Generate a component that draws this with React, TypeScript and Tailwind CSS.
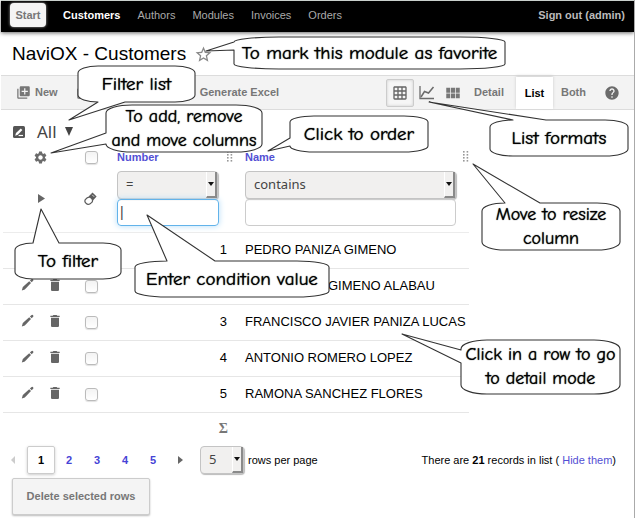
import React from "react";
import {
  MdDelete,
  MdGridOn,
  MdHelp,
  MdLibraryAdd,
  MdPictureAsPdf,
  MdSettings,
  MdStarOutline,
  MdViewModule,
} from "react-icons/md";

type Side = "left" | "top" | "bottom";

interface CalloutProps {
  place: string;
  width: number;
  height: number;
  rx: number;
  ry: number;
  side: Side;
  from: number;
  to: number;
  tip: [number, number];
  text?: string;
  children: React.ReactNode;
}

type Shape = Omit<CalloutProps, "place" | "children" | "text">;

function bubblePath({ width: w, height: h, rx, ry, side, from, to, tip }: Shape) {
  const [tx, ty] = tip;
  const arc = `A${rx} ${ry} 0 0 1`;
  const top = side === "top" ? `L${from} 0L${tx} ${ty}L${to} 0` : "";
  const bottom = side === "bottom" ? `L${to} ${h}L${tx} ${ty}L${from} ${h}` : "";
  const left = side === "left" ? `L0 ${to}L${tx} ${ty}L0 ${from}` : "";
  return `M${rx} 0${top}L${w - rx} 0${arc} ${w} ${ry}L${w} ${h - ry}${arc} ${w - rx} ${h}${bottom}L${rx} ${h}${arc} 0 ${h - ry}${left}L0 ${ry}${arc} ${rx} 0Z`;
}

/** Speech bubble that lies over the page and points at one of its parts. */
function Callout({ place, children, text = "text-[19px]", ...shape }: CalloutProps) {
  return (
    <div
      className={`pointer-events-none absolute flex items-center justify-center ${place}`}
      style={{ width: shape.width, height: shape.height }}
    >
      <svg className="absolute inset-0 h-full w-full overflow-visible" aria-hidden="true">
        <path d={bubblePath(shape)} fill="#fff" stroke="#333" strokeWidth="1.1" strokeLinejoin="round" />
      </svg>
      <span
        className={`relative text-center font-['Comic_Neue','Comic_Sans_MS',Lato,sans-serif] leading-6 whitespace-nowrap text-black [text-shadow:0_0_1px_#000] ${text}`}
      >
        {children}
      </span>
    </div>
  );
}

function Grip() {
  return (
    <svg width="6" height="12" viewBox="0 0 6 12" fill="#999" aria-hidden="true">
      {[0, 3, 6, 9].map((y) => (
        <React.Fragment key={y}>
          <rect x="0" y={y} width="1.6" height="1.6" />
          <rect x="3.6" y={y} width="1.6" height="1.6" />
        </React.Fragment>
      ))}
    </svg>
  );
}

function Eraser() {
  return (
    <svg width="13" height="13" viewBox="0 0 13 13" aria-hidden="true">
      <path d="M8.5 .5L12.6 4.4L9 8.6L4.6 4.4Z" fill="#5c5c5c" />
      <path d="M8.2 2.8L10.2 4.8" stroke="#ddd" />
      <rect x="1" y="5.6" width="7.4" height="6.4" rx="3" transform="rotate(-38 4.7 8.8)" fill="#fff" stroke="#5c5c5c" strokeWidth="1.2" />
    </svg>
  );
}

function Pencil() {
  return (
    <svg width="13" height="13" viewBox="0 0 13 13" fill="#666" aria-hidden="true">
      <path d="M.8 12.4L1.8 9L8.2 3.2L10 5L3.8 11.4Z" />
      <path d="M8.9 2.5L10.6 1Q11.2 .5 11.8 1.1L12.2 1.6Q12.7 2.2 12.2 2.7L10.7 4.3Z" />
    </svg>
  );
}

function LineChart() {
  return (
    <svg width="16" height="14" viewBox="0 0 16 14" fill="none" stroke="#6b6b6b" aria-hidden="true">
      <path d="M1 0V12.5H15" strokeWidth="1.3" />
      <path d="M2 11L5.5 5.5L9.5 7L14.5 1" strokeWidth="1.5" />
    </svg>
  );
}

function FilterEdit() {
  return (
    <svg width="12" height="12" viewBox="0 0 12 12" aria-hidden="true">
      <rect width="12" height="12" rx="1.5" fill="#555" />
      <path d="M2.2 9.8L3 7L7.8 2.5L9.4 4L4.8 8.8Z" fill="#fff" />
      <path d="M5.6 9.5H10" stroke="#fff" strokeWidth="1.2" />
    </svg>
  );
}

interface DropProps {
  label: string;
  value: string;
  width: string;
}

function Drop({ label, value, width }: DropProps) {
  return (
    <div className={`flex h-7 rounded-sm border border-[#c4c4c4] bg-[#f1f0ef] shadow-[1px_1px_1px_#bbb] ${width}`}>
      <div className="relative w-full">
        <select
          aria-label={label}
          defaultValue={value}
          className="h-full w-full appearance-none bg-transparent pl-2 font-['Noto_Sans','Open_Sans',sans-serif] text-[13px] text-[#444] outline-none"
        >
          <option>{value}</option>
        </select>
        <span className="pointer-events-none absolute inset-y-0 right-0 flex w-[11px] items-center justify-center border-r-2 border-b-2 border-l border-r-[#8a8a8a] border-b-[#8a8a8a] border-l-white bg-[#f1f0ef]">
          <svg width="6" height="4" viewBox="0 0 6 4" aria-hidden="true">
            <path d="M0 0H6L3 4Z" fill="#111" />
          </svg>
        </span>
      </div>
    </div>
  );
}

function Tick({ label }: { label: string }) {
  return (
    <input
      type="checkbox"
      aria-label={label}
      className="block h-[13px] w-[13px] appearance-none rounded-[3px] border border-[#bbb] bg-gradient-to-b from-[#f3f3f3] to-white shadow-[0_1px_1px_#e0e0e0]"
    />
  );
}

const customers = [
  { id: 1, number: "1", name: "PEDRO PANIZA GIMENO", indent: "" },
  { id: 2, number: "", name: "GIMENO ALABAU", indent: "pl-[83px]" },
  { id: 3, number: "3", name: "FRANCISCO JAVIER PANIZA LUCAS", indent: "" },
  { id: 4, number: "4", name: "ANTONIO ROMERO LOPEZ", indent: "" },
  { id: 5, number: "5", name: "RAMONA SANCHEZ FLORES", indent: "" },
];

function Header() {
  return (
    <header className="ml-px flex h-8 items-center border-t border-[#c9d0cc] bg-black pr-[9px] pb-[3px] pl-[9px] text-[11px] text-[#aaa] shadow-[0_1px_4px_#666]">
      <nav className="flex items-center gap-[17px]">
        <a href="#start" className="flex h-6 w-[36px] items-center justify-center rounded-sm bg-[#f4f4f4] font-bold text-[#777] shadow-[0_0_3px_#aaa]">
          Start
        </a>
        <a href="#customers" className="font-bold text-white">Customers</a>
        <a href="#authors">Authors</a>
        <a href="#modules">Modules</a>
        <a href="#invoices">Invoices</a>
        <a href="#orders">Orders</a>
      </nav>
      <a href="#signout" className="ml-auto font-bold text-[#bbb]">Sign out (admin)</a>
    </header>
  );
}

function Toolbar() {
  return (
    <div className="ml-px flex h-[35px] items-center border-y border-[#dcdcdc] bg-[#f3f3f3] pr-[14px] pl-[15px] text-[11px] font-bold text-[#777]">
      <button className="flex items-center gap-1">
        <MdLibraryAdd size={15} /> New
      </button>
      <button className="ml-[18px]" aria-label="PDF">
        <MdPictureAsPdf size={15} />
      </button>
      <button className="ml-[109px]">Generate Excel</button>
      <div className="ml-auto flex h-full items-center">
        <button aria-label="Table" className="flex h-7 w-7 items-center justify-center rounded-xs border border-[#ccc] bg-[#f6f6f6] text-[#666] shadow-[inset_0_0_3px_#ccc]">
          <MdGridOn size={16} />
        </button>
        <button aria-label="Chart" className="ml-1 p-px">
          <LineChart />
        </button>
        <button aria-label="Cards" className="ml-2">
          <MdViewModule size={18} />
        </button>
        <button className="ml-3">Detail</button>
        <button className="ml-3 h-8 w-[37px] self-end bg-white text-black shadow-[0_-1px_3px_#ccc]">List</button>
        <button className="ml-2">Both</button>
        <button aria-label="Help" className="ml-[18px] text-[#6b6b6b]">
          <MdHelp size={16} />
        </button>
      </div>
    </div>
  );
}

function CustomerTable() {
  return (
    <table className="ml-[3px] w-[466px] table-fixed border-collapse text-left">
      <colgroup>
        <col className="w-[75px]" />
        <col className="w-[36px]" />
        <col className="w-[119px]" />
        <col />
      </colgroup>
      <thead>
        <tr className="h-6 text-[11px] text-[#5350d4]">
          <th className="pl-[30px]">
            <button aria-label="Columns" className="block text-[#6b6b6b]">
              <MdSettings size={15} />
            </button>
          </th>
          <th className="pl-[7px]"><Tick label="Select all" /></th>
          <th className="pl-[3px]">
            <div className="flex items-center justify-between">
              <a href="#number">Number</a>
              <Grip />
            </div>
          </th>
          <th className="pl-3">
            <div className="flex items-center justify-between">
              <a href="#name">Name</a>
              <Grip />
            </div>
          </th>
        </tr>
        <tr className="h-[63px] border-b border-[#ececec]">
          <td className="pb-1 pl-[35px]">
            <button aria-label="Filter" className="block">
              <svg width="7" height="9" viewBox="0 0 7 9" aria-hidden="true"><path d="M0 0L7 4.5L0 9Z" fill="#666" /></svg>
            </button>
          </td>
          <td className="pb-1 pl-[6px]"><button aria-label="Clear" className="block"><Eraser /></button></td>
          <td className="pb-1 pl-[3px]">
            <Drop label="Number comparator" value="=" width="w-[101px]" />
            <input
              aria-label="Number value"
              defaultValue="|"
              className="block h-[27px] w-[102px] rounded-sm border border-[#62b3ea] pl-[2px] font-['Liberation_Sans',Arial,sans-serif] text-[14px] text-[#444] shadow-[0_0_6px_#b5dcf7] outline-none"
            />
          </td>
          <td className="pb-1 pl-3">
            <Drop label="Name comparator" value="contains" width="w-[211px]" />
            <input aria-label="Name value" className="block h-[27px] w-[211px] rounded-sm border border-[#ccc] outline-none" />
          </td>
        </tr>
      </thead>
      <tbody className="text-[13px] text-black">
        {customers.map((c) => (
          <tr key={c.id} className="h-9 border-b border-[#e6e6e6]">
            <td className="pb-[3px] pl-[18px]">
              <div className="flex items-center gap-[13px] text-[#666]">
                <button aria-label="Edit"><Pencil /></button>
                <button aria-label="Delete"><MdDelete size={16} /></button>
              </div>
            </td>
            <td className="pl-[7px]"><Tick label={`Select customer ${c.id}`} /></td>
            <td className="pr-[6px] text-right">{c.number}</td>
            <td className="pl-3 whitespace-nowrap"><span className={c.indent}>{c.name}</span></td>
          </tr>
        ))}
      </tbody>
      <tfoot>
        <tr className="h-[32px]">
          <td colSpan={3} className="pr-[5px] text-right font-['Liberation_Serif',serif] text-[14px] font-bold text-[#777]">Σ</td>
          <td />
        </tr>
      </tfoot>
    </table>
  );
}

function Pager() {
  return (
    <div className="flex h-8 items-center pr-[18px] pl-[11px] text-[11px] text-black">
      <svg width="4" height="8" viewBox="0 0 4 8" aria-hidden="true"><path d="M4 0L0 4L4 8Z" fill="#ccc" /></svg>
      <div className="ml-3 flex font-bold text-[#4643d6]">
        <a href="#page1" className="flex h-7 w-7 items-center justify-center rounded-xs border border-[#ccc] text-black shadow-[0_1px_3px_#ccc]">1</a>
        <a href="#page2" className="flex h-7 w-7 items-center justify-center">2</a>
        <a href="#page3" className="flex h-7 w-7 items-center justify-center">3</a>
        <a href="#page4" className="flex h-7 w-7 items-center justify-center">4</a>
        <a href="#page5" className="flex h-7 w-7 items-center justify-center">5</a>
      </div>
      <a href="#next" aria-label="Next" className="ml-[11px]">
        <svg width="5" height="8" viewBox="0 0 5 8" aria-hidden="true"><path d="M0 0L5 4L0 8Z" fill="#666" /></svg>
      </a>
      <div className="ml-[17px]"><Drop label="Rows per page" value="5" width="w-11" /></div>
      <span className="ml-1">rows per page</span>
      <span className="ml-auto">
        There are <b>21</b> records in list ( <a href="#hide" className="text-[#5350d4]">Hide them</a>)
      </span>
    </div>
  );
}

export default function App() {
  return (
    <div className="relative min-h-screen overflow-hidden border-r border-[#aaa] bg-white font-['Liberation_Sans',Arial,sans-serif]">
      <Header />
      <div className="flex h-[43px] items-center gap-2 pt-[2px] pl-3">
        <h1 className="text-[19px] text-black">NaviOX - Customers</h1>
        <button aria-label="Favorite" className="text-[#888]"><MdStarOutline size={19} /></button>
      </div>
      <Toolbar />
      <div className="flex h-[35px] items-center gap-3 pt-2 pl-[13px]">
        <button aria-label="Edit filter"><FilterEdit /></button>
        <button className="flex items-center gap-2 font-['Noto_Sans','Open_Sans',sans-serif] text-[17px] text-[#444]">
          All
          <svg width="8" height="9" viewBox="0 0 8 9" aria-hidden="true"><path d="M0 0H8L4 9Z" fill="#444" /></svg>
        </button>
      </div>
      <CustomerTable />
      <Pager />
      <button className="mt-[2px] ml-3 block h-[37px] w-[138px] rounded-xs border border-[#ccc] bg-[#f4f4f4] text-[11px] font-bold text-[#777] shadow-[0_1px_2px_#bbb]">
        Delete selected rows
      </button>

      <Callout place="left-[234px] top-[37px]" width={271} height={32} rx={45} ry={5} side="left" from={5} to={13} tip={[-28, 14]}>
        To mark this module as favorite
      </Callout>
      <Callout place="left-[78px] top-[66px]" width={117} height={36} rx={20} ry={7} side="bottom" from={20} to={47} tip={[-9, 54]}>
        Filter list
      </Callout>
      <Callout place="left-[106px] top-[105px]" width={156} height={47} rx={26} ry={8} side="left" from={28} to={39} tip={[-55, 48]} text="text-[18px]">
        To add, remove
        <br />
        and move columns
      </Callout>
      <Callout place="left-[290px] top-[116px]" width={138} height={36} rx={24} ry={6} side="left" from={22} to={30} tip={[-22, 35]}>
        Click to order
      </Callout>
      <Callout place="left-[490px] top-[120px]" width={138} height={36} rx={23} ry={7} side="top" from={23} to={56} tip={[-61, -18]}>
        List formats
      </Callout>
      <Callout place="left-[482px] top-[203px]" width={138} height={47} rx={23} ry={8} side="top" from={23} to={58} tip={[-9, -39]} text="text-[18px]">
        Move to resize
        <br />
        column
      </Callout>
      <Callout place="left-[15px] top-[243px]" width={106} height={36} rx={18} ry={7} side="top" from={18} to={44} tip={[26, -34]}>
        To filter
      </Callout>
      <Callout place="left-[135px] top-[261px]" width={194} height={36} rx={32} ry={6} side="top" from={32} to={80} tip={[12, -46]}>
        Enter condition value
      </Callout>
      <Callout place="left-[461px] top-[340px]" width={159} height={54} rx={26} ry={9} side="left" from={10} to={23} tip={[-59, -6]} text="text-[18px]">
        Click in a row to go
        <br />
        to detail mode
      </Callout>
    </div>
  );
}
